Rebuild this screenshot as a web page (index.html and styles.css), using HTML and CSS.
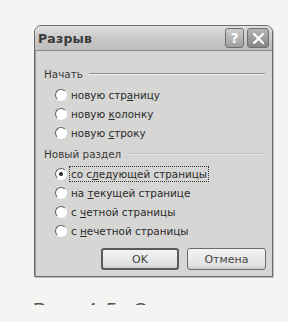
FILE: index.html
```html
<!DOCTYPE html>
<html lang="ru">
<head>
<meta charset="utf-8">
<link rel="stylesheet" href="styles.css">
</head>
<body>
<div class="page">
  <div class="dialog">
    <div class="titlebar">
      <span class="title">Разрыв</span>
      <div class="tbtns">
        <span class="tbtn help">?</span>
        <span class="tbtn close"><svg width="13" height="13" viewBox="0 0 13 13"><path d="M2 2 L11 11 M11 2 L2 11" stroke="#fff" stroke-width="2.2" stroke-linecap="round"/></svg></span>
      </div>
    </div>
    <div class="client">
      <div class="group"><span>Начать</span><i class="rule"></i></div>
      <div class="rows">
        <div class="row"><span class="radio"></span><span>новую стр<u>а</u>ницу</span></div>
        <div class="row"><span class="radio"></span><span>новую <u>к</u>олонку</span></div>
        <div class="row"><span class="radio"></span><span>новую <u>с</u>троку</span></div>
      </div>
      <div class="group g2"><span>Новый раздел</span><i class="rule faint"></i></div>
      <div class="rows">
        <div class="row"><span class="radio on"></span><span class="focus">со с<u>л</u>едующей страницы</span></div>
        <div class="row"><span class="radio"></span><span>на <u>т</u>екущей странице</span></div>
        <div class="row"><span class="radio"></span><span>с <u>ч</u>етной страницы</span></div>
        <div class="row"><span class="radio"></span><span>с <u>н</u>ечетной страницы</span></div>
      </div>
      <div class="buttons">
        <span class="btn def">OK</span>
        <span class="btn">Отмена</span>
      </div>
    </div>
  </div>
  <div class="caption"><span>Рис. 4.5. Окно диалога Разрыв</span></div>
</div>
</body>
</html>
```
FILE: styles.css
```css
html, body { margin: 0; padding: 0; }
body {
  background: #f4f4f3;
  width: 288px;
  height: 322px;
  overflow: hidden;
  font-family: "DejaVu Sans", "Liberation Sans", sans-serif;
  color: #2a2a2a;
}
.page { padding: 25px 0 0 34px; }
.dialog {
  width: 239px;
  box-sizing: border-box;
  border: 1px solid #6d6d6d;
  border-radius: 7px 7px 0 0;
  background: #d6d6d5;
  box-shadow: 1px 1px 0 #bbb;
}
.titlebar {
  height: 24px;
  display: flex;
  align-items: center;
  justify-content: space-between;
  padding: 0 3px 0 3px;
  background: linear-gradient(#dedede, #c6c6c6 60%, #bfbfbf);
  border-radius: 6px 6px 0 0;
  border-bottom: 1px solid #8a8a8a;
}
.title {
  font-weight: bold;
  font-size: 12.5px;
  color: #3a3a3a;
  letter-spacing: 0.2px;
}
.tbtns { display: flex; gap: 3px; }
.tbtn {
  width: 20px; height: 20px;
  box-sizing: border-box;
  border: 1px solid #6f6f6f;
  border-radius: 3px;
  display: flex; align-items: center; justify-content: center;
  color: #fff;
  font-weight: bold;
  font-size: 14px;
}
.help { background: linear-gradient(#cfcfcf, #9d9d9d); width: 19px; }
.close { background: linear-gradient(#b5b5b5, #858585); width: 22px; }
.client {
  padding: 13px 6px 6px 8px;
  border-left: 1px solid #9a9a9a;
  font-size: 10.4px;
}
.group {
  display: flex;
  align-items: center;
  height: 19px;
  margin-bottom: 2px;
  color: #3a3a3a;
}
.g2 { margin-top: 2px; margin-bottom: 1px; }
.rule {
  flex: 1;
  height: 0;
  border-top: 1px solid #8e8e8e;
  border-bottom: 1px solid #f2f2f2;
  margin: 1px 1px 0 6px;
}
.rule.faint { border-top-color: #c4c4c4; border-bottom-color: #e6e6e6; }
.rows { padding-left: 11px; }
.row {
  display: flex;
  align-items: center;
  height: 19px;
  gap: 4px;
}
.radio {
  width: 12px; height: 12px;
  box-sizing: border-box;
  border-radius: 50%;
  background: #fff;
  border: 1.5px solid;
  border-color: #5e5e5e #fff #fff #5e5e5e;
  display: flex; align-items: center; justify-content: center;
  flex: none;
}
.radio.on::after {
  content: "";
  width: 4px; height: 4px;
  border-radius: 50%;
  background: #222;
}
.focus {
  outline: 1px dotted #333;
  padding: 1px 1px;
  margin-left: -1px;
}
.buttons {
  display: flex;
  justify-content: flex-end;
  gap: 8px;
  margin-top: 8px;
}
.btn {
  width: 79px; height: 22px;
  box-sizing: border-box;
  border: 1px solid #6a6a6a;
  border-radius: 3px;
  background: linear-gradient(#f4f4f4, #e2e2e2 80%, #cfcfcf);
  display: flex; align-items: center; justify-content: center;
  color: #444;
  font-size: 11px;
}
.btn.def { width: 78px; border: 2px solid #5a5a5a; }
.caption {
  margin-top: 22px;
  margin-left: -1px;
  height: 6px;
  overflow: hidden;
  font-family: "Liberation Sans", sans-serif;
  font-size: 19px;
  line-height: 19px;
  color: #555;
  letter-spacing: 2px;
}
.caption span { display: block; margin-top: 1px; }
```
